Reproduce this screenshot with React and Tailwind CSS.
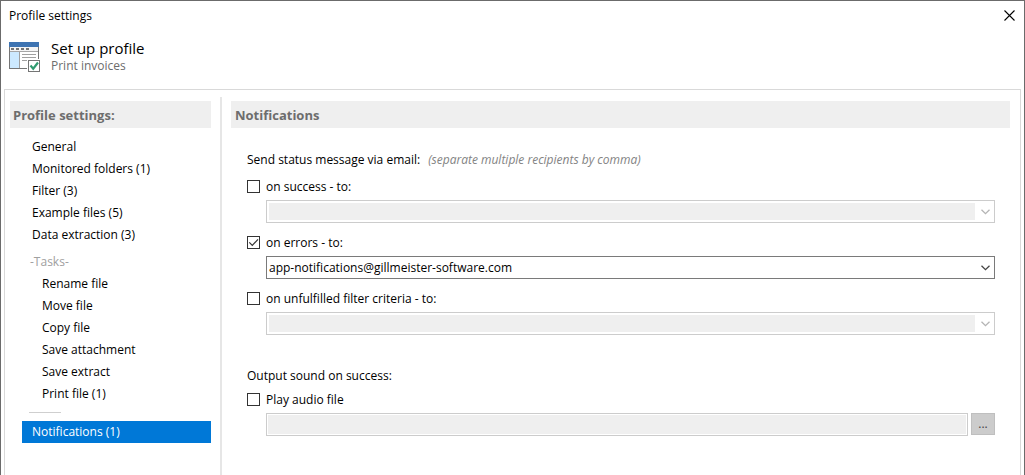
import React, { useState } from "react";

const mainSections = [
  "General",
  "Monitored folders (1)",
  "Filter (3)",
  "Example files (5)",
  "Data extraction (3)",
];

const tasks = [
  "Rename file",
  "Move file",
  "Copy file",
  "Save attachment",
  "Save extract",
  "Print file (1)",
];

function ProfileIcon() {
  return (
    <svg width="32" height="31" viewBox="0 0 32 31" shapeRendering="crispEdges" aria-hidden="true">
      <rect x="0" y="0" width="30" height="27" fill="#757575" />
      <rect x="1" y="5" width="28" height="21" fill="#ffffff" />
      <rect x="0" y="0" width="30" height="5" fill="#3e74b2" />
      <rect x="1" y="5" width="28" height="4" fill="#f5f5f5" />
      <path d="M2 6h3v2H2zM7 6h3v2H7zM12 6h3v2h-3zM17 6h3v2h-3z" fill="#757575" />
      <rect x="1" y="9" width="28" height="1" fill="#a6a6a6" />
      <rect x="1" y="10" width="9" height="16" fill="#cce9ff" />
      <rect x="10" y="10" width="1" height="16" fill="#a0a0a0" />
      <path d="M13 12h14v1H13zM13 15h14v1H13zM13 18h14v1H13z" fill="#a0a0a0" />
      <rect x="18" y="17" width="14" height="14" fill="#ffffff" />
      <rect x="19.5" y="18.5" width="11" height="11" fill="#ffffff" stroke="#757575" />
      <path
        d="M21.5 23.5l2.7 3.2 4.8-6.2"
        fill="none"
        stroke="#309b70"
        strokeWidth="2.2"
        shapeRendering="auto"
      />
    </svg>
  );
}

function CheckBox({ id, label, checked, onChange }) {
  return (
    <div className="flex h-[19px] items-center gap-1.5">
      <span className="grid size-[13px] shrink-0">
        <input
          id={id}
          type="checkbox"
          checked={checked}
          onChange={onChange}
          className="col-start-1 row-start-1 m-0 size-[13px] appearance-none border border-[#333333] bg-white"
        />
        {checked && (
          <svg
            viewBox="0 0 13 13"
            className="pointer-events-none col-start-1 row-start-1 size-[13px]"
            aria-hidden="true"
          >
            <path d="M2.3 6.3l3 3L11 3.4" fill="none" stroke="#333333" strokeWidth="1.2" />
          </svg>
        )}
      </span>
      <label htmlFor={id}>{label}</label>
    </div>
  );
}

function ComboBox({ label, value, disabled, onChange }) {
  return (
    <div
      className={
        disabled
          ? "flex h-[23px] border border-[#cccccc] bg-white"
          : "flex h-[23px] border border-[#7a7a7a] bg-white"
      }
    >
      <input
        type="text"
        aria-label={label}
        value={value}
        disabled={disabled}
        onChange={onChange}
        className="my-0.5 ml-0.5 min-w-0 flex-1 bg-white outline-none disabled:bg-[#efefef]"
      />
      <button
        type="button"
        aria-label={"Show list: " + label}
        disabled={disabled}
        className="flex w-[19px] shrink-0 items-center justify-center pl-0.5 text-[#444444] disabled:text-[#b4b4b4]"
      >
        <svg width="9" height="6" viewBox="0 0 9 6" aria-hidden="true">
          <path d="M0.5 0.8l4 3.8 4-3.8" fill="none" stroke="currentColor" strokeWidth="1.3" />
        </svg>
      </button>
    </div>
  );
}

function EmailOption({ id, label, listLabel, checked, onToggle, value, onChange }) {
  return (
    <div>
      <CheckBox id={id} label={label} checked={checked} onChange={(e) => onToggle(e.target.checked)} />
      <div className="mt-1 pl-[19px]">
        <ComboBox
          label={listLabel}
          value={value}
          disabled={!checked}
          onChange={(e) => onChange(e.target.value)}
        />
      </div>
    </div>
  );
}

function NavItem({ children, active, nested }) {
  const base = "flex h-[22px] items-center ";
  const look = active
    ? "bg-[#0078d7] pl-2.5 text-white"
    : nested
      ? "pl-5 text-black"
      : "pl-2.5 text-black";
  return (
    <li>
      <a href="#" aria-current={active ? "page" : undefined} className={base + look}>
        {children}
      </a>
    </li>
  );
}

function PanelHeading({ children }) {
  return (
    <h2 className="flex h-[27px] items-center bg-[#efefef] text-[13px] font-bold text-[#6d6d6d]">
      {children}
    </h2>
  );
}

export default function App() {
  const [success, setSuccess] = useState(false);
  const [errors, setErrors] = useState(true);
  const [unfulfilled, setUnfulfilled] = useState(false);
  const [sound, setSound] = useState(false);
  const [successTo, setSuccessTo] = useState("");
  const [errorsTo, setErrorsTo] = useState("app-notifications@gillmeister-software.com");
  const [unfulfilledTo, setUnfulfilledTo] = useState("");
  const [audioFile, setAudioFile] = useState("");

  return (
    <div className="flex min-h-screen flex-col border-x border-t border-[#6b6b6b] bg-white font-['Open_Sans','Noto_Sans',sans-serif] text-[12px] leading-4 text-black">
      <div className="flex h-[29px] items-center justify-between pr-[9px] pl-2">
        <span>Profile settings</span>
        <button type="button" aria-label="Close" className="flex size-[11px] items-center justify-center">
          <svg width="11" height="11" viewBox="0 0 11 11" aria-hidden="true">
            <path d="M0.5 0.5l10 10M10.5 0.5l-10 10" stroke="#000000" strokeWidth="1.1" />
          </svg>
        </button>
      </div>

      <header className="flex h-[59px] items-start gap-2.5 pt-2 pl-2">
        <div className="pt-1">
          <ProfileIcon />
        </div>
        <div>
          <h1 className="text-[15px] leading-5">Set up profile</h1>
          <p className="leading-4 text-[#6d6d6d]">Print invoices</p>
        </div>
      </header>

      <div className="mr-[3px] ml-[3px] flex flex-1 border-x border-t border-[#d9d9d9]">
        <nav aria-label="Profile settings" className="w-[206px] shrink-0 pt-[11px] pl-[5px]">
          <PanelHeading>
            <span className="pl-[3px]">Profile settings:</span>
          </PanelHeading>
          <div className="pt-2 pl-3">
            <ul>
              {mainSections.map((name) => (
                <NavItem key={name}>{name}</NavItem>
              ))}
            </ul>
            <p className="mt-[5px] flex h-[22px] items-center pl-2 text-[#a0a0a0]">-Tasks-</p>
            <ul>
              {tasks.map((name) => (
                <NavItem key={name} nested>
                  {name}
                </NavItem>
              ))}
            </ul>
            <hr className="mt-[7px] mb-2 ml-[7px] w-8 border-t border-[#cfcfcf]" />
            <ul>
              <NavItem active>Notifications (1)</NavItem>
            </ul>
          </div>
        </nav>

        <div className="mt-[7px] ml-[9px] w-0.5 shrink-0 bg-[#e6e6e6]" />

        <main className="min-w-0 flex-1 pt-[11px] pr-2.5 pl-[9px]">
          <PanelHeading>
            <span className="pl-1">Notifications</span>
          </PanelHeading>

          <div className="pt-6 pr-[15px] pl-4">
            <p className="flex gap-2">
              <span>Send status message via email:</span>
              <em className="text-[#838383]">(separate multiple recipients by comma)</em>
            </p>

            <div className="mt-[9px] flex flex-col gap-2.5">
              <EmailOption
                id="on-success"
                label="on success - to:"
                listLabel="Recipients on success"
                checked={success}
                onToggle={setSuccess}
                value={successTo}
                onChange={setSuccessTo}
              />
              <EmailOption
                id="on-errors"
                label="on errors - to:"
                listLabel="Recipients on errors"
                checked={errors}
                onToggle={setErrors}
                value={errorsTo}
                onChange={setErrorsTo}
              />
              <EmailOption
                id="on-unfulfilled"
                label="on unfulfilled filter criteria - to:"
                listLabel="Recipients on unfulfilled filter criteria"
                checked={unfulfilled}
                onToggle={setUnfulfilled}
                value={unfulfilledTo}
                onChange={setUnfulfilledTo}
              />
            </div>

            <p className="mt-[33px]">Output sound on success:</p>
            <div className="mt-1.5">
              <CheckBox
                id="play-audio"
                label="Play audio file"
                checked={sound}
                onChange={(e) => setSound(e.target.checked)}
              />
              <div className="mt-1 flex gap-[3px] pl-[19px]">
                <div className="flex h-[23px] min-w-0 flex-1 border border-[#cccccc] p-px">
                  <input
                    type="text"
                    aria-label="Audio file"
                    value={audioFile}
                    disabled={!sound}
                    onChange={(e) => setAudioFile(e.target.value)}
                    className="min-w-0 flex-1 bg-white outline-none disabled:bg-[#efefef]"
                  />
                </div>
                <button
                  type="button"
                  aria-label="Browse for audio file"
                  disabled={!sound}
                  className="h-[22px] w-6 shrink-0 border border-[#bfbfbf] bg-[#cccccc] text-[#444444]"
                >
                  ...
                </button>
              </div>
            </div>
          </div>
        </main>
      </div>
    </div>
  );
}
